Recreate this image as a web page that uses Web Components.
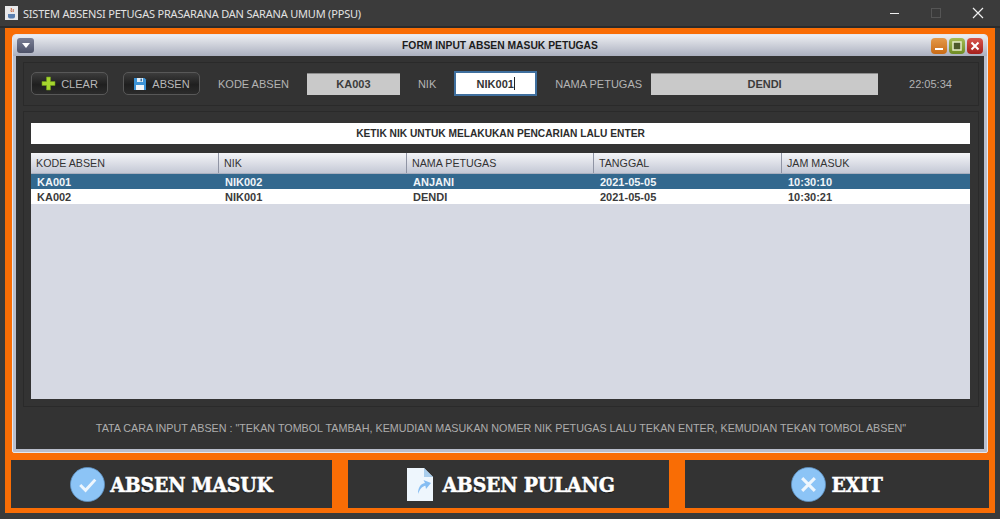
<!DOCTYPE html>
<html>
<head>
<meta charset="utf-8">
<title>PPSU</title>
<style>
  html, body { margin: 0; height: 519px; overflow: hidden; background: #3a3a3a; font-family: "Liberation Sans", Arial, sans-serif; }
</style>
</head>
<body>
<os-window heading="SISTEM ABSENSI PETUGAS PRASARANA DAN SARANA UMUM (PPSU)">
  <inner-frame heading="FORM INPUT ABSEN MASUK PETUGAS">
    <tool-bar>
      <tool-button icon="plus" style="margin-right:15px">CLEAR</tool-button>
      <tool-button icon="save" style="margin-right:18px">ABSEN</tool-button>
      <field-label style="margin-right:18px">KODE ABSEN</field-label>
      <field-box style="width:93px;margin-right:18px">KA003</field-box>
      <field-label style="margin-right:18px">NIK</field-label>
      <field-input value="NIK001" style="margin-right:18px"></field-input>
      <field-label style="margin-right:9px">NAMA PETUGAS</field-label>
      <field-box style="width:227px;margin-right:31px">DENDI</field-box>
      <field-label>22:05:34</field-label>
    </tool-bar>
    <table-panel hint="KETIK NIK UNTUK MELAKUKAN PENCARIAN LALU ENTER"></table-panel>
    <foot-note>TATA CARA INPUT ABSEN : "TEKAN TOMBOL TAMBAH, KEMUDIAN MASUKAN NOMER NIK PETUGAS LALU TEKAN ENTER, KEMUDIAN TEKAN TOMBOL ABSEN"</foot-note>
  </inner-frame>
  <action-bar>
    <action-button icon="check">ABSEN MASUK</action-button>
    <action-button icon="file" style="gap:9px;padding-left:5px">ABSEN PULANG</action-button>
    <action-button icon="close">EXIT</action-button>
  </action-bar>
</os-window>

<script>
const ICONS = {
  plus: `<svg width="15" height="15" viewBox="0 0 15 15"><path d="M5.500 1h4v4.500H14v4H9.500V14h-4V9.500H1v-4h4.500z" fill="#a6d62e" stroke="#6d9a18" stroke-width=".6"/></svg>`,
  save: `<svg width="14" height="14" viewBox="0 0 14 14"><path d="M1 1h10.500L13 2.500V13H1z" fill="#3d93d6"/><rect x="4" y="1" width="6" height="4" fill="#e4eef6"/><rect x="7.500" y="1.600" width="1.500" height="2.700" fill="#3d6f9a"/><rect x="3" y="8" width="8" height="5" fill="#f2f5f8"/></svg>`,
  check: `<svg width="35" height="35" viewBox="0 0 36 36"><circle cx="18" cy="18" r="17.500" fill="#8cc4f6" stroke="#5f93c4" stroke-width=".8"/><path d="M10.500 18.500l5.500 5.500L26 13" fill="none" stroke="#eef6fd" stroke-width="3"/></svg>`,
  close: `<svg width="35" height="35" viewBox="0 0 36 36"><circle cx="18" cy="18" r="17.500" fill="#8cc4f6" stroke="#5f93c4" stroke-width=".8"/><path d="M11.500 11.500l13 13M24.500 11.500l-13 13" fill="none" stroke="#eef6fd" stroke-width="3.200"/></svg>`,
  file: `<svg width="26" height="33" viewBox="0 0 26 33"><path d="M0 0h17l9 9v24H0z" fill="#eef6fd"/><path d="M17 0l9 9h-9z" fill="#a9cdec"/><path d="M11 26c0-6 2-10 7-11l-1.500-3L24 15l-5 6-.6-3.200C15 18.500 13 21 11 26z" fill="#85bdf2"/></svg>`
};

class OsWindow extends HTMLElement {
  constructor() {
    super();
    const shadow = this.attachShadow({ mode: 'open' });
    shadow.innerHTML = `
      <style>
        :host { display: block; width: 1000px; height: 519px; }
        .bar { height: 26px; display: flex; align-items: center; padding-left: 5px; color: #e2e2e2;
               font: 11px "Noto Sans", "Open Sans", sans-serif; box-sizing: border-box; background: #3b3b3b; }
        .bar svg.app { margin-right: 5px; }
        .bar span { flex: 1; letter-spacing: -.2px; }
        .ctl { display: flex; padding-right: 1px; }
        .ctl div { width: 42px; height: 26px; display: flex; align-items: center; justify-content: center; }
        .edge { height: 2px; background: #2b2b2b; }
        .orange { margin: 0 5px; height: 485px; background: #f96d05; padding: 6px 6px 5px; box-sizing: border-box;
                  display: flex; flex-direction: column; }
      </style>
      <div class="bar">
        <svg class="app" width="13" height="14" viewBox="0 0 13 14"><rect width="13" height="14" fill="#e8e8ea"/><path d="M3 8h7v2.500a2 2 0 0 1-2 2H5a2 2 0 0 1-2-2z" fill="#5a7fb0"/><path d="M6 2c1.500 1.500-1 2 .5 4M8 3c1 1-.5 1.500.3 3" fill="none" stroke="#c4562a" stroke-width="1"/></svg>
        <span>${this.getAttribute('heading')}</span>
        <div class="ctl">
          <div><svg width="11" height="11"><rect x="1" y="5" width="9" height="1" fill="#eee"/></svg></div>
          <div><svg width="11" height="11"><rect x=".5" y=".5" width="9" height="9" fill="none" stroke="#555"/></svg></div>
          <div><svg width="12" height="12"><path d="M1 1l10 10M11 1L1 11" stroke="#eee" stroke-width="1.200"/></svg></div>
        </div>
      </div>
      <div class="edge"></div>
      <div class="orange"><slot></slot></div>`;
  }
}

class InnerFrame extends HTMLElement {
  constructor() {
    super();
    const shadow = this.attachShadow({ mode: 'open' });
    shadow.innerHTML = `
      <style>
        :host { display: flex; flex-direction: column; height: 419px; margin: 0 1px; box-sizing: border-box;
                border-radius: 4px 4px 2px 2px; overflow: hidden; background: #b9becc; border: 1px solid #e6e8ee; }
        .title { height: 21px; flex: none; display: flex; align-items: center; padding: 0 4px; box-sizing: border-box;
                 background: linear-gradient(#eceef2, #abb0bf); position: relative; }
        .title b { position: absolute; left: 0; right: 0; text-align: center; font-size: 10.300px; color: #1c1c1c; }
        .menu { width: 17px; height: 15px; border-radius: 3px; background: linear-gradient(#7a7f95, #4e5369);
                display: flex; align-items: center; justify-content: center; position: relative; }
        .menu i { border: 4px solid transparent; border-top: 5px solid #fff; border-bottom: 0; }
        .btns { margin-left: auto; display: flex; gap: 2px; position: relative; }
        .btns div { width: 16px; height: 16px; border-radius: 4px; display: flex; align-items: center; justify-content: center; }
        .o { background: linear-gradient(#e59a4a, #c86a14); }
        .g { background: linear-gradient(#a4bc54, #6f8c24); }
        .r { background: linear-gradient(#d8544c, #a5201c); }
        .body { flex: 1; margin: 0 3px 3px; background: #333; display: flex; flex-direction: column; padding: 6px 5px 0 7px; min-height: 0; }
      </style>
      <div class="title">
        <div class="menu"><i></i></div>
        <b>${this.getAttribute('heading')}</b>
        <div class="btns">
          <div class="o"><svg width="10" height="10"><rect x="1" y="7" width="8" height="2" fill="#fff"/></svg></div>
          <div class="g"><svg width="10" height="10"><rect x="1" y="1" width="8" height="8" fill="#4d5a2a" stroke="#e6eec8" stroke-width="1.500"/></svg></div>
          <div class="r"><svg width="10" height="10"><path d="M1.500 1.500l7 7M8.500 1.500l-7 7" stroke="#fff" stroke-width="2"/></svg></div>
        </div>
      </div>
      <div class="body"><slot></slot></div>`;
  }
}

class ToolBar extends HTMLElement {
  constructor() {
    super();
    this.attachShadow({ mode: 'open' }).innerHTML = `
      <style>
        :host { display: flex; align-items: center; height: 44px; box-sizing: border-box; padding: 0 0 1px 7px;
                border: 1px solid #2a2a2a; flex: none; white-space: nowrap; }
      </style><slot></slot>`;
  }
}

class ToolButton extends HTMLElement {
  constructor() {
    super();
    this.attachShadow({ mode: 'open' }).innerHTML = `
      <style>
        :host { display: inline-flex; align-items: center; justify-content: center; gap: 5px; width: 77px; height: 23px;
                box-sizing: border-box; border: 1px solid #585858; border-radius: 5px; flex: none;
                background: linear-gradient(#3c3c3c, #1f1f1f 55%, #2b2b2b); color: #b8b8b8; font-size: 11px; }
      </style>${ICONS[this.getAttribute('icon')]}<slot></slot>`;
  }
}

class FieldLabel extends HTMLElement {
  constructor() {
    super();
    this.attachShadow({ mode: 'open' }).innerHTML = `
      <style>:host { display: block; flex: none; color: #b4b4b4; font-size: 11px; }</style><slot></slot>`;
  }
}

class FieldBox extends HTMLElement {
  constructor() {
    super();
    this.attachShadow({ mode: 'open' }).innerHTML = `
      <style>
        :host { display: flex; align-items: center; justify-content: center; height: 22px; flex: none; box-sizing: border-box;
                background: #c9c9c9; color: #3c3c3c; font-size: 11px; font-weight: bold; border-top: 1px solid #8d8d8d; }
      </style><slot></slot>`;
  }
}

class FieldInput extends HTMLElement {
  constructor() {
    super();
    this.attachShadow({ mode: 'open' }).innerHTML = `
      <style>
        :host { display: flex; align-items: center; justify-content: center; width: 83px; height: 25px; flex: none;
                box-sizing: border-box; background: #fff; border: 2px solid #3f6f9e; color: #333;
                font-size: 11px; font-weight: bold; }
        i { width: 1px; height: 13px; background: #222; }
      </style><span>${this.getAttribute('value')}</span><i></i>`;
  }
}

class TablePanel extends HTMLElement {
  constructor() {
    super();
    const cols = ['KODE ABSEN', 'NIK', 'NAMA PETUGAS', 'TANGGAL', 'JAM MASUK'];
    const rows = [
      ['KA001', 'NIK002', 'ANJANI', '2021-05-05', '10:30:10'],
      ['KA002', 'NIK001', 'DENDI', '2021-05-05', '10:30:21']
    ];
    const row = (r, i) => `<div class="row ${i === 0 ? 'sel' : ''}">${r.map(c => `<span>${c}</span>`).join('')}</div>`;
    this.attachShadow({ mode: 'open' }).innerHTML = `
      <style>
        :host { display: flex; flex-direction: column; height: 296px; margin-top: 5px; flex: none; box-sizing: border-box;
                border: 1px solid #2a2a2a; padding: 11px 8px 7px 7px; }
        .hint { height: 21px; flex: none; background: #fff; display: flex; align-items: center; justify-content: center;
                font-size: 10.200px; font-weight: bold; color: #2c2c2c; }
        .table { flex: 1; margin-top: 9px; background: #d6d9e3; }
        .head, .row { display: grid; grid-template-columns: 188px 188px 187px 188px 188px; }
        .head { height: 21px; background: linear-gradient(#f4f5f8, #c4c8d5); font-size: 10.700px; color: #333; border-bottom: 1px solid #aab0c0; box-sizing: border-box; }
        .head span { display: flex; align-items: center; padding-left: 5px; border-right: 1px solid #8f94a4; }
        .head span:last-child { border-right: 0; }
        .row { height: 15px; background: #fff; font-size: 11px; font-weight: bold; color: #3a3a3a; line-height: 16px; }
        .row span { padding-left: 6px; }
        .sel { background: #33688e; color: #f0f4f8; }
      </style>
      <div class="hint">${this.getAttribute('hint')}</div>
      <div class="table">
        <div class="head">${cols.map(c => `<span>${c}</span>`).join('')}</div>
        ${rows.map(row).join('')}
      </div>`;
  }
}

class FootNote extends HTMLElement {
  constructor() {
    super();
    this.attachShadow({ mode: 'open' }).innerHTML = `
      <style>
        :host { display: flex; flex: 1; align-items: center; justify-content: center; color: #adadad; font-size: 10.750px; white-space: nowrap; }
      </style><slot></slot>`;
  }
}

class ActionBar extends HTMLElement {
  constructor() {
    super();
    this.attachShadow({ mode: 'open' }).innerHTML = `
      <style>
        :host { display: grid; grid-template-columns: 321px 321px 304px; column-gap: 16px; height: 48px; margin-top: 7px; flex: none; }
      </style><slot></slot>`;
  }
}

class ActionButton extends HTMLElement {
  constructor() {
    super();
    this.attachShadow({ mode: 'open' }).innerHTML = `
      <style>
        :host { display: flex; align-items: center; justify-content: center; gap: 5px; background: #333; color: #fff; box-sizing: border-box;
                font-family: "DejaVu Serif Condensed", "DejaVu Serif", serif; font-weight: bold; font-size: 21px; white-space: nowrap;
                letter-spacing: -.2px; -webkit-text-stroke: .5px #fff; text-shadow: 0 1px 1px #111; }
        svg { flex: none; }
      </style>${ICONS[this.getAttribute('icon')]}<slot></slot>`;
  }
}

customElements.define('os-window', OsWindow);
customElements.define('inner-frame', InnerFrame);
customElements.define('tool-bar', ToolBar);
customElements.define('tool-button', ToolButton);
customElements.define('field-label', FieldLabel);
customElements.define('field-box', FieldBox);
customElements.define('field-input', FieldInput);
customElements.define('table-panel', TablePanel);
customElements.define('foot-note', FootNote);
customElements.define('action-bar', ActionBar);
customElements.define('action-button', ActionButton);
</script>
</body>
</html>
